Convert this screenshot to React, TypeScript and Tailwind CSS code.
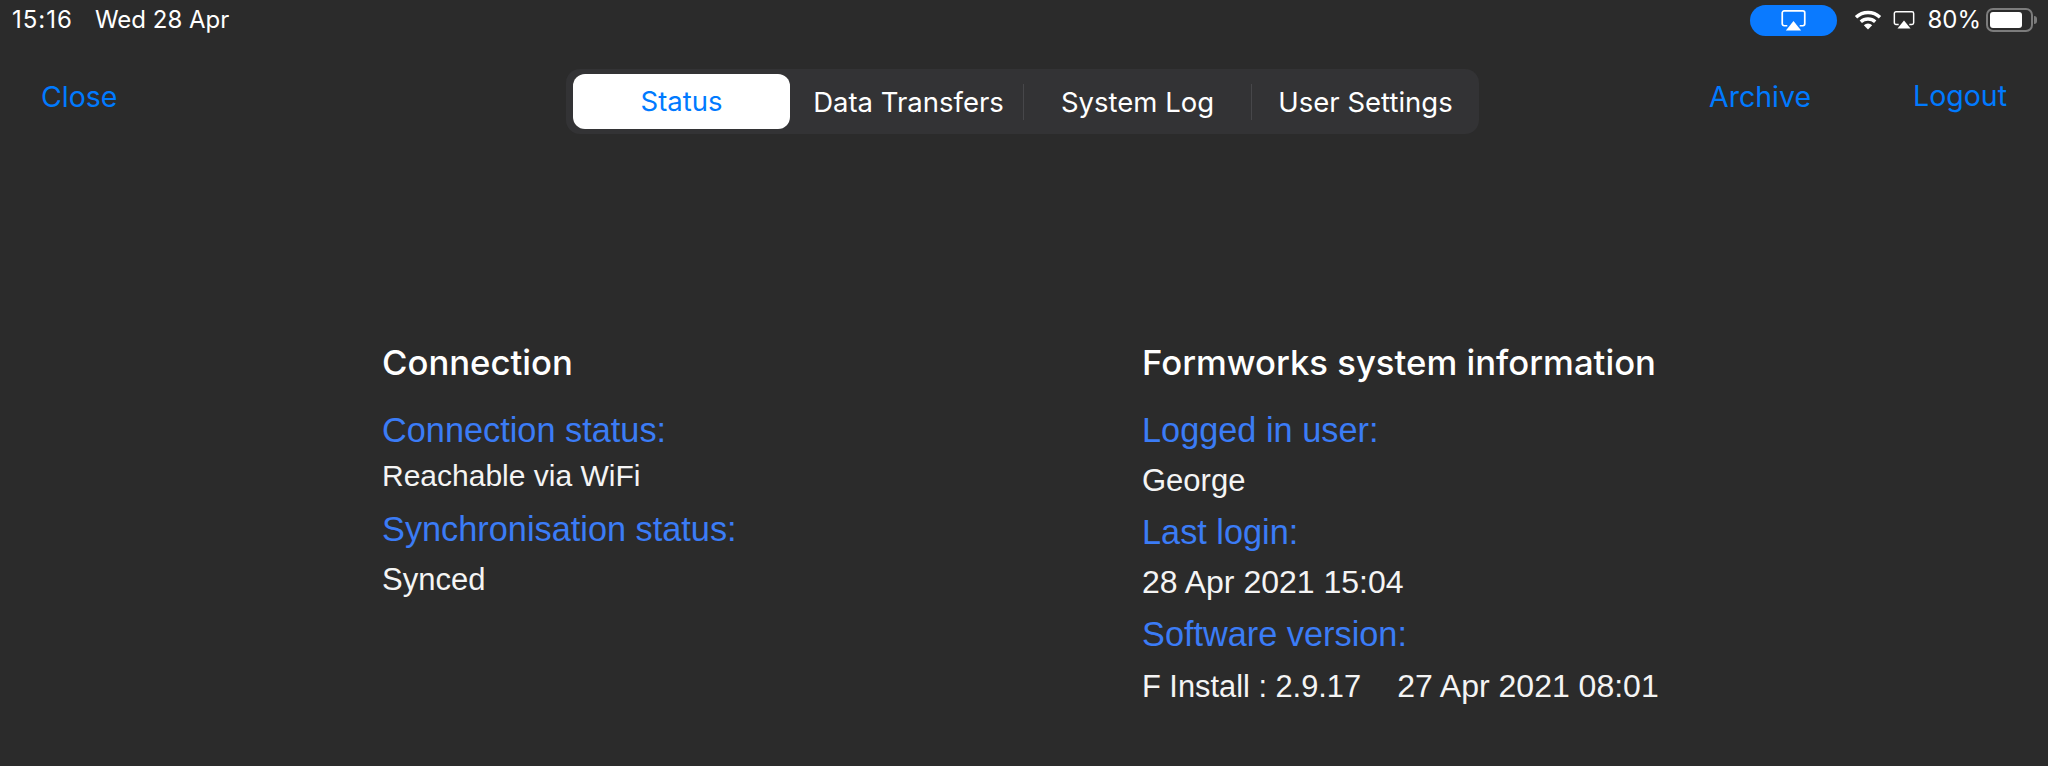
import React from 'react';

const tabs = ['Data Transfers', 'System Log', 'User Settings'];

const AirplayIcon = ({ className }: { className: string }) => (
  <svg viewBox="0 0 26 22" className={className} fill="none">
    <path d="M6.5 16.5H3.2a2 2 0 0 1-2-2V3a2 2 0 0 1 2-2h19.6a2 2 0 0 1 2 2v11.5a2 2 0 0 1-2 2h-3.3" stroke="currentColor" strokeWidth="1.8" />
    <path d="M13 11.5 L21 21.5 H5 Z" fill="currentColor" />
  </svg>
);

const WifiIcon = () => (
  <svg viewBox="0 0 28 20" className="h-[20px] w-[28px] text-white" fill="none" stroke="currentColor" strokeWidth="3.4">
    <path d="M2 7.2a17.5 17.5 0 0 1 24 0" />
    <path d="M6.8 11.8a10.6 10.6 0 0 1 14.4 0" />
    <path d="M14 19.6 L9.8 15.2a6 6 0 0 1 8.4 0 Z" fill="currentColor" stroke="none" />
  </svg>
);

const Label = ({ children, className }: { children: React.ReactNode; className: string }) => (
  <div className={`text-[34.3px] leading-[38px] text-[#3b7cf6] ${className}`}>{children}</div>
);

const Value = ({ children, className }: { children: React.ReactNode; className: string }) => (
  <div className={`leading-[36px] text-[#f4f4f4] whitespace-pre ${className}`}>{children}</div>
);

export default function App() {
  return (
    <div className="h-[766px] w-[2048px] overflow-hidden bg-[#2b2b2b] font-['Inter',sans-serif]">
      {/* status bar */}
      <div className="flex h-[40px] items-center pr-[11px] pl-[12px] text-[24px] leading-none text-white">
        <span className="tracking-[1px]">15:16</span>
        <span className="ml-[22px]">Wed 28 Apr</span>
        <div className="ml-auto flex items-center">
          <div className="flex h-[31px] w-[87px] items-center justify-center rounded-full bg-[#0a7aff] text-white">
            <AirplayIcon className="h-[21px] w-[25px]" />
          </div>
          <div className="ml-[17px]"><WifiIcon /></div>
          <AirplayIcon className="ml-[11px] h-[18px] w-[22px] text-white" />
          <span className="ml-[12px]">80%</span>
          <div className="ml-[5px] flex items-center">
            <div className="flex h-[24px] w-[47px] items-center rounded-[7px] border-2 border-[#7c7c7c] p-[2px]">
              <div className="h-full w-[32px] rounded-[3px] bg-white" />
            </div>
            <div className="ml-[1px] h-[8px] w-[3px] rounded-r-full bg-[#7c7c7c]" />
          </div>
        </div>
      </div>

      {/* nav row */}
      <div className="mt-[29px] grid h-[65px] grid-cols-[566px_913px_1fr] items-center text-[28.5px] text-[#007aff]">
        <div className="mb-[8px] pl-[41px]">Close</div>
        <div className="grid h-full grid-cols-[228px_230px_228px_1fr] rounded-[14px] bg-[#333335] text-[27.5px] text-white">
          <div className="py-[5px] pr-[4px] pl-[7px]">
            <div className="flex h-full items-center justify-center rounded-[12px] bg-white pt-[1px] text-[#007aff]">Status</div>
          </div>
          {tabs.map((t, i) => (
            <div key={t} className="flex items-center">
              <div className="flex-1 pt-[2px] text-center">{t}</div>
              {i < 2 && <div className="h-[36px] w-px bg-[#47474a]" />}
            </div>
          ))}
        </div>
        <div className="mb-[8px] flex items-center pl-[230px]">
          <span>Archive</span>
          <span className="mb-[3px] ml-[102px]">Logout</span>
        </div>
      </div>

      {/* info columns */}
      <div className="mt-[209px] grid grid-cols-[760px_1fr] pl-[382px] font-['Liberation_Sans',sans-serif]">
        <div>
          <h2 className="font-['Inter',sans-serif] text-[34.7px] leading-[38px] font-medium text-white">Connection</h2>
          <Label className="mt-[30px]">Connection status:</Label>
          <Value className="mt-[9px] text-[30px]">Reachable via WiFi</Value>
          <Label className="mt-[16px]">Synchronisation status:</Label>
          <Value className="mt-[14px] text-[31px]">Synced</Value>
        </div>
        <div>
          <h2 className="font-['Inter',sans-serif] text-[34.7px] leading-[38px] font-medium text-white">Formworks system information</h2>
          <Label className="mt-[30px]">Logged in user:</Label>
          <Value className="mt-[14px] text-[31px]">George</Value>
          <Label className="mt-[14px]">Last login:</Label>
          <Value className="mt-[13px] text-[32px]">28 Apr 2021 15:04</Value>
          <Label className="mt-[15px]">Software version:</Label>
          <Value className="mt-[15px] text-[30.8px]">
            F Install : 2.9.17
            <span className="ml-[36px] text-[32px]">27 Apr 2021 08:01</span>
          </Value>
        </div>
      </div>
    </div>
  );
}
